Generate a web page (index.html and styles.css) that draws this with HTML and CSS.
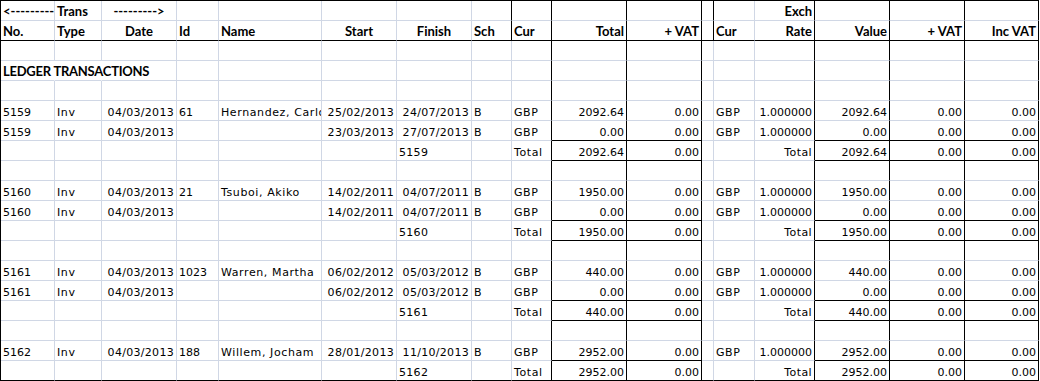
FILE: index.html
```html
<!DOCTYPE html>
<html>
<head>
<meta charset="utf-8">
<link rel="stylesheet" href="styles.css">
</head>
<body>
<table class="sheet">
<colgroup>
<col class="w54"><col class="w47"><col class="w75"><col class="w42"><col class="w103"><col class="w75"><col class="w75"><col class="w40"><col class="w40"><col class="w75"><col class="w75"><col class="w12"><col class="w41"><col class="w60"><col class="w75"><col class="w75"><col class="w74">
</colgroup>
<tbody>
<tr class="hd h1"><td>&lt;---------</td><td>Trans</td><td class="ctr">---------&gt;</td><td></td><td></td><td></td><td></td><td></td><td></td><td></td><td></td><td></td><td></td><td class="rt">Exch</td><td></td><td></td><td></td></tr>
<tr class="hd h2"><td>No.</td><td>Type</td><td class="ctr">Date</td><td>Id</td><td>Name</td><td class="ctr">Start</td><td class="ctr">Finish</td><td>Sch</td><td>Cur</td><td class="rt">Total</td><td class="rt">+ VAT</td><td></td><td>Cur</td><td class="rt">Rate</td><td class="rt">Value</td><td class="rt">+ VAT</td><td class="rt">Inc VAT</td></tr>
<tr class="d"><td></td><td></td><td></td><td></td><td></td><td></td><td></td><td></td><td></td><td></td><td></td><td></td><td></td><td></td><td></td><td></td><td></td></tr>
<tr class="d lg"><td class="title">LEDGER TRANSACTIONS</td><td></td><td></td><td></td><td></td><td></td><td></td><td></td><td></td><td></td><td></td><td></td><td></td><td></td><td></td><td></td><td></td></tr>
<tr class="d"><td></td><td></td><td></td><td></td><td></td><td></td><td></td><td></td><td></td><td></td><td></td><td></td><td></td><td></td><td></td><td></td><td></td></tr>

<tr class="d"><td>5159</td><td>Inv</td><td>04/03/2013</td><td>61</td><td>Hernandez, Carlos</td><td>25/02/2013</td><td>24/07/2013</td><td>B</td><td>GBP</td><td>2092.64</td><td>0.00</td><td></td><td>GBP</td><td>1.000000</td><td>2092.64</td><td>0.00</td><td>0.00</td></tr>
<tr class="d pre"><td>5159</td><td>Inv</td><td>04/03/2013</td><td></td><td></td><td>23/03/2013</td><td>27/07/2013</td><td>B</td><td>GBP</td><td>0.00</td><td>0.00</td><td></td><td>GBP</td><td>1.000000</td><td>0.00</td><td>0.00</td><td>0.00</td></tr>
<tr class="d tot"><td></td><td></td><td></td><td></td><td></td><td></td><td>5159</td><td></td><td>Total</td><td>2092.64</td><td>0.00</td><td></td><td></td><td>Total</td><td>2092.64</td><td>0.00</td><td>0.00</td></tr>
<tr class="d"><td></td><td></td><td></td><td></td><td></td><td></td><td></td><td></td><td></td><td></td><td></td><td></td><td></td><td></td><td></td><td></td><td></td></tr>

<tr class="d"><td>5160</td><td>Inv</td><td>04/03/2013</td><td>21</td><td>Tsuboi, Akiko</td><td>14/02/2011</td><td>04/07/2011</td><td>B</td><td>GBP</td><td>1950.00</td><td>0.00</td><td></td><td>GBP</td><td>1.000000</td><td>1950.00</td><td>0.00</td><td>0.00</td></tr>
<tr class="d pre"><td>5160</td><td>Inv</td><td>04/03/2013</td><td></td><td></td><td>14/02/2011</td><td>04/07/2011</td><td>B</td><td>GBP</td><td>0.00</td><td>0.00</td><td></td><td>GBP</td><td>1.000000</td><td>0.00</td><td>0.00</td><td>0.00</td></tr>
<tr class="d tot"><td></td><td></td><td></td><td></td><td></td><td></td><td>5160</td><td></td><td>Total</td><td>1950.00</td><td>0.00</td><td></td><td></td><td>Total</td><td>1950.00</td><td>0.00</td><td>0.00</td></tr>
<tr class="d"><td></td><td></td><td></td><td></td><td></td><td></td><td></td><td></td><td></td><td></td><td></td><td></td><td></td><td></td><td></td><td></td><td></td></tr>

<tr class="d"><td>5161</td><td>Inv</td><td>04/03/2013</td><td>1023</td><td>Warren, Martha</td><td>06/02/2012</td><td>05/03/2012</td><td>B</td><td>GBP</td><td>440.00</td><td>0.00</td><td></td><td>GBP</td><td>1.000000</td><td>440.00</td><td>0.00</td><td>0.00</td></tr>
<tr class="d pre"><td>5161</td><td>Inv</td><td>04/03/2013</td><td></td><td></td><td>06/02/2012</td><td>05/03/2012</td><td>B</td><td>GBP</td><td>0.00</td><td>0.00</td><td></td><td>GBP</td><td>1.000000</td><td>0.00</td><td>0.00</td><td>0.00</td></tr>
<tr class="d tot"><td></td><td></td><td></td><td></td><td></td><td></td><td>5161</td><td></td><td>Total</td><td>440.00</td><td>0.00</td><td></td><td></td><td>Total</td><td>440.00</td><td>0.00</td><td>0.00</td></tr>
<tr class="d"><td></td><td></td><td></td><td></td><td></td><td></td><td></td><td></td><td></td><td></td><td></td><td></td><td></td><td></td><td></td><td></td><td></td></tr>

<tr class="d pre"><td>5162</td><td>Inv</td><td>04/03/2013</td><td>188</td><td>Willem, Jocham</td><td>28/01/2013</td><td>11/10/2013</td><td>B</td><td>GBP</td><td>2952.00</td><td>0.00</td><td></td><td>GBP</td><td>1.000000</td><td>2952.00</td><td>0.00</td><td>0.00</td></tr>
<tr class="d tot last"><td></td><td></td><td></td><td></td><td></td><td></td><td>5162</td><td></td><td>Total</td><td>2952.00</td><td>0.00</td><td></td><td></td><td>Total</td><td>2952.00</td><td>0.00</td><td>0.00</td></tr>
</tbody>
</table>
</body>
</html>
```
FILE: styles.css
```css
html, body {
  margin: 0;
  padding: 0;
  background: #fff;
}

.sheet {
  border-collapse: separate;
  border-spacing: 0;
  table-layout: fixed;
  width: 1039px;
  border-left: 1px solid #000;
  border-top: 1px solid #000;
  font-family: "DejaVu Sans", Verdana, sans-serif;
  font-size: 11px;
  color: #000;
}

.w54 { width: 54px; }
.w47 { width: 47px; }
.w75 { width: 75px; }
.w42 { width: 42px; }
.w103 { width: 103px; }
.w40 { width: 40px; }
.w12 { width: 12px; }
.w41 { width: 41px; }
.w60 { width: 60px; }
.w74 { width: 74px; }

.sheet tr { height: 20px; }

.sheet td {
  box-sizing: border-box;
  height: 20px;
  padding: 0 2px 0 2px;
  border-right: 1px solid #d0d7e5;
  border-bottom: 1px solid #d0d7e5;
  vertical-align: bottom;
  white-space: nowrap;
  overflow: hidden;
  line-height: 14px;
  text-align: left;
}

/* header rows */
.hd td {
  font-family: Lato, "Liberation Sans", sans-serif;
  font-weight: 700;
  font-size: 13px;
  padding-bottom: 2px;
}
.hd td.ctr { text-align: center; }
.hd td.rt { text-align: right; }
.hd td:nth-child(8),
.hd td:nth-child(12) { border-right-color: #000; }
.h2 td { border-bottom-color: #000; }

/* body data: numeric columns right aligned */
.d td:nth-child(3),
.d td:nth-child(6),
.d td:nth-child(7),
.d td:nth-child(10),
.d td:nth-child(11),
.d td:nth-child(14),
.d td:nth-child(15),
.d td:nth-child(16),
.d td:nth-child(17) { text-align: right; }
.tot td:nth-child(7) { text-align: left; }

.d td:nth-child(2),
.d td:nth-child(5),
.d td:nth-child(8),
.d td:nth-child(9),
.d td:nth-child(13) { letter-spacing: 0.6px; }
.d td:nth-child(3),
.d td:nth-child(6),
.d td:nth-child(7) { letter-spacing: 0.3px; }
.tot td:nth-child(14) { letter-spacing: 0.4px; }

/* vertical black rules */
.sheet td:nth-child(9),
.sheet td:nth-child(10),
.sheet td:nth-child(11),
.sheet td:nth-child(14),
.sheet td:nth-child(15),
.sheet td:nth-child(16),
.sheet td:nth-child(17) { border-right-color: #000; }

/* total boxes */
.pre td:nth-child(10),
.pre td:nth-child(11),
.pre td:nth-child(15),
.pre td:nth-child(16),
.pre td:nth-child(17),
.tot td:nth-child(10),
.tot td:nth-child(11),
.tot td:nth-child(15),
.tot td:nth-child(16),
.tot td:nth-child(17) { border-bottom-color: #000; }

.last td { border-bottom-color: #000; }

/* section title overflowing across cells */
.lg td.title {
  overflow: visible;
  font-family: Lato, "Liberation Sans", sans-serif;
  font-weight: 700;
  font-size: 13px;
  letter-spacing: -0.25px;
  padding-bottom: 2px;
}
.lg td:nth-child(1),
.lg td:nth-child(2) { border-right-color: #fff; }
```
